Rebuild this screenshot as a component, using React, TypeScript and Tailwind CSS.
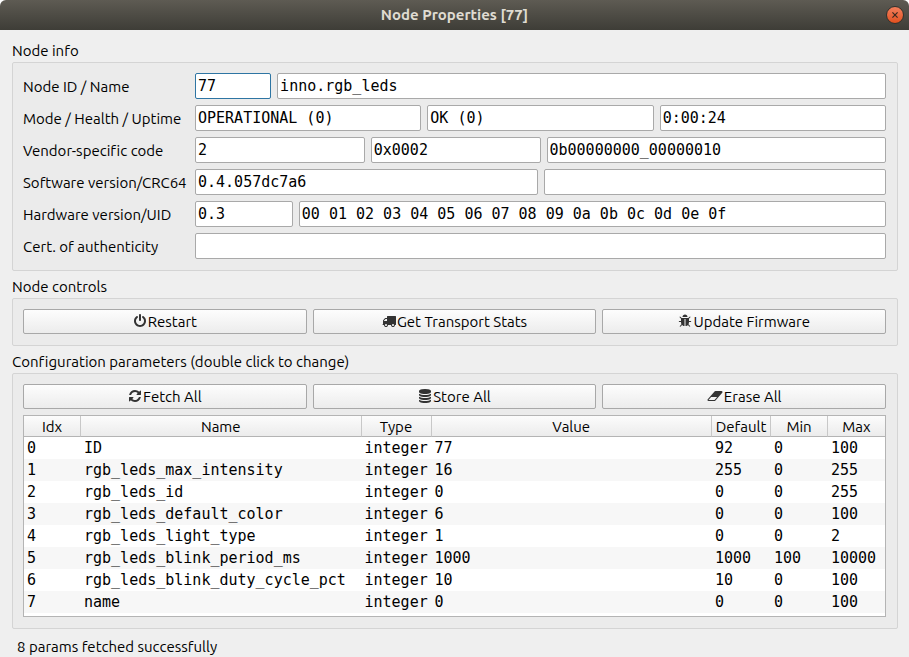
import { useState } from "react";
import type { ReactNode } from "react";

const ICONS = {
  power:
    "M1664 896q0 156-61 298t-164 245-245 164-298 61-298-61-245-164-164-245-61-298q0-182 80.5-343t226.5-270q43-32 95.5-25t83.5 50q32 42 24.5 94.5t-49.5 84.5q-98 74-151.5 181t-53.5 228q0 104 40.5 198.5t109.5 163.5 163.5 109.5 198.5 40.5 198.5-40.5 163.5-109.5 109.5-163.5 40.5-198.5q0-121-53.5-228t-151.5-181q-42-32-49.5-84.5t24.5-94.5q31-43 84-50t95 25q146 109 226.5 270t80.5 343zm-640-768v640q0 52-38 90t-90 38-90-38-38-90v-640q0-52 38-90t90-38 90 38 38 90z",
  truck:
    "M640 1408q0-52-38-90t-90-38-90 38-38 90 38 90 90 38 90-38 38-90zm-384-512h384v-256h-158q-13 0-22 9l-195 195q-9 9-9 22v30zm1280 512q0-52-38-90t-90-38-90 38-38 90 38 90 90 38 90-38 38-90zm256-1088v1024q0 15-4 26.5t-13.5 18.5-16.5 11.5-23.5 6-22.5 2-25.5 0-22.5-.5q0 106-75 181t-181 75-181-75-75-181h-384q0 106-75 181t-181 75-181-75-75-181h-64q-3 0-22.5.5t-25.5 0-22.5-2-23.5-6-16.5-11.5-13.5-18.5-4-26.5q0-26 19-45t45-19v-320q0-8-.5-35t0-38 2.5-34.5 6.5-37 14-30.5 22.5-30l198-198q19-19 50.5-32t58.5-13h160v-192q0-26 19-45t45-19h1024q26 0 45 19t19 45z",
  bug: "M1696 960q0 26-19 45t-45 19h-224q0 171-67 290l208 209q19 19 19 45t-19 45q-18 19-45 19t-45-19l-198-197q-5 5-15 13t-42 28.5-65 36.5-82 29-97 13v-896h-128v896q-51 0-101.5-13.5t-87-33-66-39-43.5-32.5l-15-14-183 207q-20 21-48 21-24 0-43-16-19-18-20.5-44.5t15.5-46.5l202-227q-58-114-58-274h-224q-26 0-45-19t-19-45 19-45 45-19h224v-294l-173-173q-19-19-19-45t19-45 45-19 45 19l173 173h844l173-173q19-19 45-19t45 19 19 45-19 45l-173 173v294h224q26 0 45 19t19 45zm-480-576h-640q0-133 93.5-226.5t226.5-93.5 226.5 93.5 93.5 226.5z",
  refresh:
    "M1639 1056q0 5-1 7-64 268-268 434.5t-478 166.5q-146 0-282.5-55t-243.5-157l-129 129q-19 19-45 19t-45-19-19-45v-448q0-26 19-45t45-19h448q26 0 45 19t19 45-19 45l-137 137q71 66 161 102t187 36q134 0 250-65t186-179q11-17 53-117 8-23 30-23h192q13 0 22.5 9.5t9.5 22.5zm25-800v448q0 26-19 45t-45 19h-448q-26 0-45-19t-19-45 19-45l138-138q-148-137-349-137-134 0-250 65t-186 179q-11 17-53 117-8 23-30 23h-199q-13 0-22.5-9.5t-9.5-22.5v-7q65-268 270-434.5t480-166.5q146 0 284 55.5t245 156.5l130-129q19-19 45-19t45 19 19 45z",
  database:
    "M896 768q237 0 443-43t325-127v170q0 69-103 128t-280 93.5-385 34.5-385-34.5-280-93.5-103-128v-170q119 84 325 127t443 43zm0 768q237 0 443-43t325-127v170q0 69-103 128t-280 93.5-385 34.5-385-34.5-280-93.5-103-128v-170q119 84 325 127t443 43zm0-384q237 0 443-43t325-127v170q0 69-103 128t-280 93.5-385 34.5-385-34.5-280-93.5-103-128v-170q119 84 325 127t443 43zm0-1152q208 0 385 34.5t280 93.5 103 128v128q0 69-103 128t-280 93.5-385 34.5-385-34.5-280-93.5-103-128v-128q0-69 103-128t280-93.5 385-34.5z",
  eraser:
    "M960 1408l336-384h-768l-336 384h768zm1013-1077q15 34 9.5 71.5t-30.5 65.5l-896 1024q-38 44-96 44h-768q-38 0-69.5-20.5t-47.5-54.5q-15-34-9.5-71.5t30.5-65.5l896-1024q38-44 96-44h768q38 0 69.5 20.5t47.5 54.5z",
};

function Icon({ name }: { name: keyof typeof ICONS }) {
  const wide = name === "eraser";
  return (
    <svg
      viewBox={wide ? "0 0 2048 1792" : "0 0 1792 1792"}
      className={wide ? "mb-0.5 h-3.5 w-4" : "mb-0.5 size-3.5"}
      fill="#333333"
      aria-hidden="true"
    >
      <path d={ICONS[name]} />
    </svg>
  );
}

function Group({ title, children }: { title: string; children: ReactNode }) {
  return (
    <section>
      <h2 className="pt-1.5 pb-px">{title}</h2>
      <div className="rounded-xs border border-[#d4d4d4] bg-[#ebebeb] px-2.5 pt-2.5 pb-[11px]">{children}</div>
    </section>
  );
}

function PushButton({ icon, children }: { icon: keyof typeof ICONS; children: ReactNode }) {
  return (
    <button
      type="button"
      className="flex h-[25px] flex-1 items-center justify-center gap-px rounded-xs border border-[#a8a8a8] bg-linear-to-b from-[#fdfdfd] to-[#ececec] active:from-[#dddddd] active:to-[#dddddd]"
    >
      <Icon name={icon} />
      {children}
    </button>
  );
}

interface InfoRow {
  label: string;
  columns: string;
  fields: { name: string; value: string; active?: boolean }[];
}

const INFO: InfoRow[] = [
  {
    label: "Node ID / Name",
    columns: "grid-cols-[1fr_8fr]",
    fields: [
      { name: "Node ID", value: "77", active: true },
      { name: "Name", value: "inno.rgb_leds" },
    ],
  },
  {
    label: "Mode / Health / Uptime",
    columns: "grid-cols-3",
    fields: [
      { name: "Mode", value: "OPERATIONAL (0)" },
      { name: "Health", value: "OK (0)" },
      { name: "Uptime", value: "0:00:24" },
    ],
  },
  {
    label: "Vendor-specific code",
    columns: "grid-cols-[1fr_1fr_2fr]",
    fields: [
      { name: "Decimal code", value: "2" },
      { name: "Hexadecimal code", value: "0x0002" },
      { name: "Binary code", value: "0b00000000_00000010" },
    ],
  },
  {
    label: "Software version/CRC64",
    columns: "grid-cols-2",
    fields: [
      { name: "Software version", value: "0.4.057dc7a6" },
      { name: "CRC64", value: "" },
    ],
  },
  {
    label: "Hardware version/UID",
    columns: "grid-cols-[1fr_6fr]",
    fields: [
      { name: "Hardware version", value: "0.3" },
      { name: "UID", value: "00 01 02 03 04 05 06 07 08 09 0a 0b 0c 0d 0e 0f" },
    ],
  },
  {
    label: "Cert. of authenticity",
    columns: "grid-cols-1",
    fields: [{ name: "Certificate of authenticity", value: "" }],
  },
];

const COLUMNS = [
  { title: "Idx", width: "w-[57px]" },
  { title: "Name", width: "" },
  { title: "Type", width: "w-[70px]" },
  { title: "Value", width: "" },
  { title: "Default", width: "w-[59px]" },
  { title: "Min", width: "w-[57px]" },
  { title: "Max", width: "w-[57px]" },
];

const PARAMS = [
  ["0", "ID", "integer", "77", "92", "0", "100"],
  ["1", "rgb_leds_max_intensity", "integer", "16", "255", "0", "255"],
  ["2", "rgb_leds_id", "integer", "0", "0", "0", "255"],
  ["3", "rgb_leds_default_color", "integer", "6", "0", "0", "100"],
  ["4", "rgb_leds_light_type", "integer", "1", "0", "0", "2"],
  ["5", "rgb_leds_blink_period_ms", "integer", "1000", "1000", "100", "10000"],
  ["6", "rgb_leds_blink_duty_cycle_pct", "integer", "10", "10", "0", "100"],
  ["7", "name", "integer", "0", "0", "0", "100"],
];

export default function App() {
  const [open, setOpen] = useState(true);
  if (!open) return null;

  return (
    <div className="min-h-screen bg-white font-['Ubuntu','Noto_Sans',sans-serif] text-[15px] leading-5 text-black [font-variant-ligatures:none]">
      <div className="flex min-h-screen flex-col overflow-hidden rounded-t-md bg-[#efefef]">
        <header className="grid h-[30px] grid-cols-[1fr_auto_1fr] items-center bg-linear-to-b from-[#5e5b53] to-[#3e3d37] px-[5px]">
          <h1 className="col-start-2 font-bold text-[#dfdbd2]">Node Properties [77]</h1>
          <button
            type="button"
            aria-label="Close"
            onClick={() => setOpen(false)}
            className="flex size-[18px] items-center justify-center justify-self-end rounded-full border border-[#33322d] bg-linear-to-b from-[#f37f5b] to-[#e2501c]"
          >
            <svg viewBox="0 0 6 6" className="size-1.5" stroke="#3c2a20" strokeWidth="1.2" aria-hidden="true">
              <path d="M.4.4l5.2 5.2M5.6.4L.4 5.6" />
            </svg>
          </button>
        </header>

        <main className="flex flex-1 flex-col pt-[5px] pr-[11px] pl-3">
          <Group title="Node info">
            <div className="flex flex-col gap-1.5 pr-px">
              {INFO.map((row, r) => (
                <div key={row.label} className="grid grid-cols-[166px_1fr] items-center gap-x-1.5">
                  <label htmlFor={`field-${r}-0`} className="pt-0.5 whitespace-nowrap">
                    {row.label}
                  </label>
                  <div className={`grid gap-1.5 ${row.columns}`}>
                    {row.fields.map((f, i) => (
                      <input
                        key={f.name}
                        id={`field-${r}-${i}`}
                        aria-label={i > 0 ? f.name : undefined}
                        readOnly
                        defaultValue={f.value}
                        className={`h-[26px] w-full min-w-0 rounded-xs border bg-white px-0.5 pb-px font-['DejaVu_Sans_Mono',monospace] text-[15px] outline-none ${
                          f.active ? "border-[#2e75a3]" : "border-[#a9a9a9]"
                        }`}
                      />
                    ))}
                  </div>
                </div>
              ))}
            </div>
          </Group>

          <Group title="Node controls">
            <div className="flex gap-1.5 pr-px">
              <PushButton icon="power">Restart</PushButton>
              <PushButton icon="truck">Get Transport Stats</PushButton>
              <PushButton icon="bug">Update Firmware</PushButton>
            </div>
          </Group>

          <Group title="Configuration parameters (double click to change)">
            <div className="flex gap-1.5 pr-px">
              <PushButton icon="refresh">Fetch All</PushButton>
              <PushButton icon="database">Store All</PushButton>
              <PushButton icon="eraser">Erase All</PushButton>
            </div>
            <div className="mt-1.5 mr-px border border-[#b4b4b4] bg-white pb-[3px]">
              <table className="w-full table-fixed border-separate border-spacing-0">
                <thead>
                  <tr className="bg-linear-to-b from-[#fcfcfc] to-[#ebebeb]">
                    {COLUMNS.map((c) => (
                      <th
                        key={c.title}
                        scope="col"
                        className={`h-[21px] border-r border-b border-r-[#c8c8c8] border-b-[#b4b4b4] p-0 pt-0.5 leading-[18px] font-normal last:border-r-0 ${c.width}`}
                      >
                        {c.title}
                      </th>
                    ))}
                  </tr>
                </thead>
                <tbody className="font-['DejaVu_Sans_Mono',monospace] text-[15px]">
                  {PARAMS.map((p) => (
                    <tr key={p[0]} className="even:bg-[#f7f7f7]">
                      {p.map((v, i) => (
                        <td key={i} className="h-[22px] p-0 pl-[3px] whitespace-nowrap">
                          {v}
                        </td>
                      ))}
                    </tr>
                  ))}
                </tbody>
              </table>
            </div>
          </Group>

          <p role="status" className="mt-2 px-[5px]">
            8 params fetched successfully
          </p>
        </main>
      </div>
    </div>
  );
}
